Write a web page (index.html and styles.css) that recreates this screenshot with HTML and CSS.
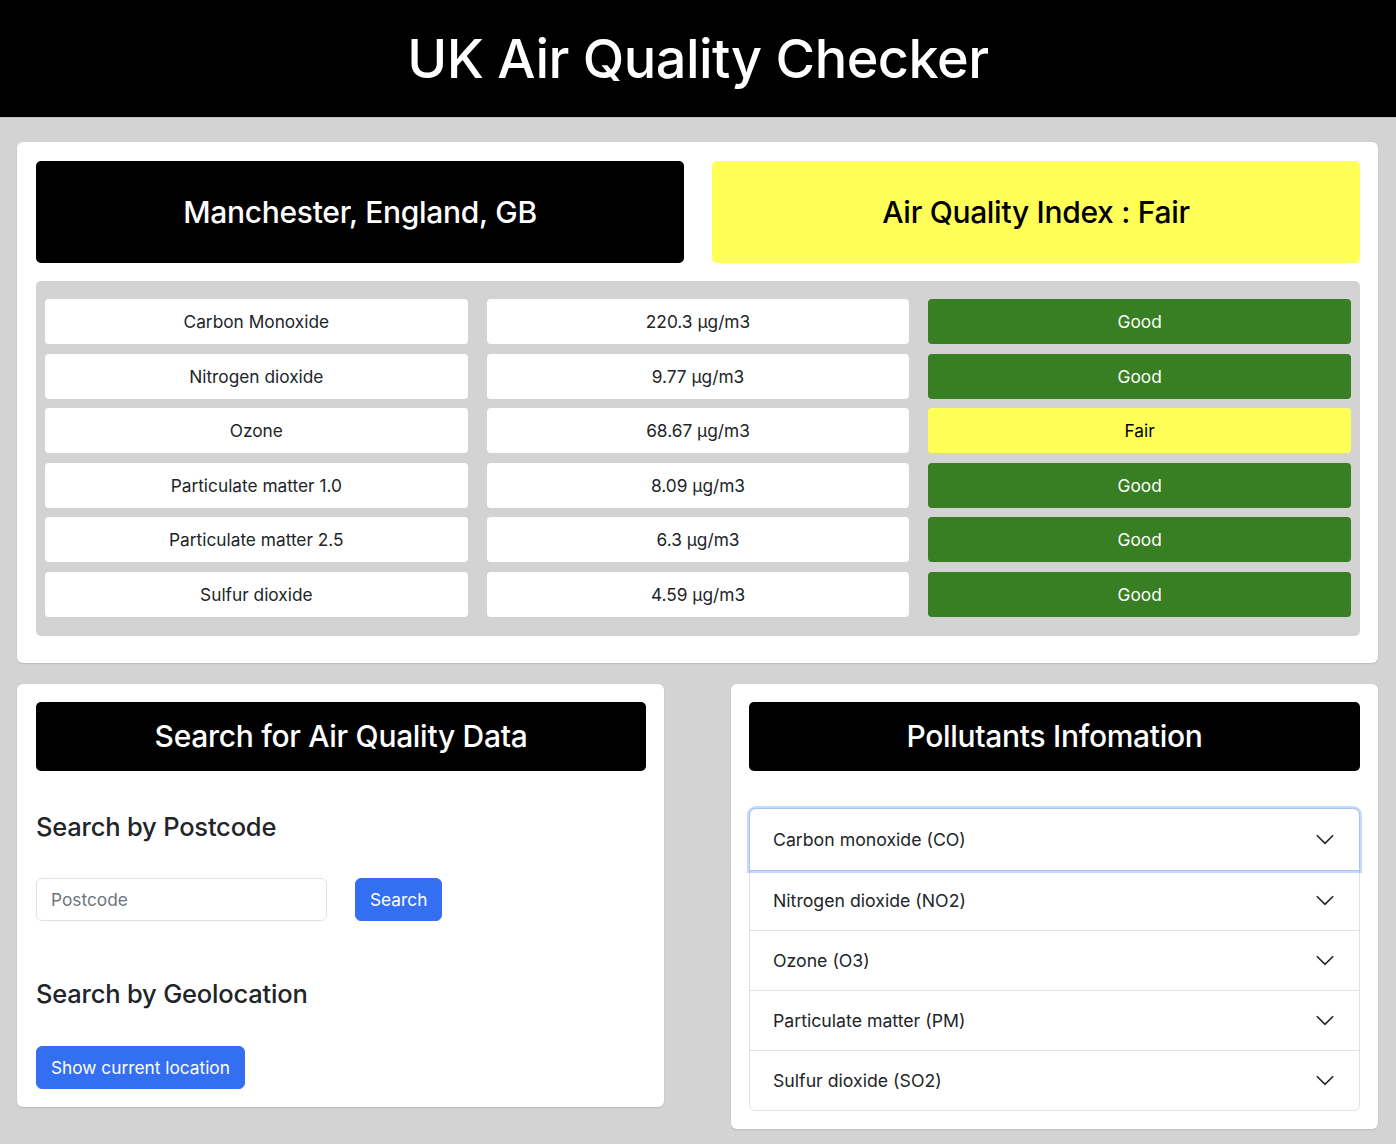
FILE: index.html
```html
<!DOCTYPE html>
<html lang="en">
<head>
<meta charset="utf-8">
<title>UK Air Quality Checker</title>
<link rel="stylesheet" href="styles.css">
</head>
<body>
<header class="topbar"><h1>UK Air Quality Checker</h1></header>
<main class="page">
  <section class="card summary">
    <div class="banners">
      <div class="banner banner-dark">Manchester, England, GB</div>
      <div class="banner banner-fair">Air Quality Index : Fair</div>
    </div>
    <div class="grid-table">
      <div class="cell">Carbon Monoxide</div><div class="cell">220.3 µg/m3</div><div class="cell good">Good</div>
      <div class="cell">Nitrogen dioxide</div><div class="cell">9.77 µg/m3</div><div class="cell good">Good</div>
      <div class="cell">Ozone</div><div class="cell">68.67 µg/m3</div><div class="cell fair">Fair</div>
      <div class="cell">Particulate matter 1.0</div><div class="cell">8.09 µg/m3</div><div class="cell good">Good</div>
      <div class="cell">Particulate matter 2.5</div><div class="cell">6.3 µg/m3</div><div class="cell good">Good</div>
      <div class="cell">Sulfur dioxide</div><div class="cell">4.59 µg/m3</div><div class="cell good">Good</div>
    </div>
  </section>
  <div class="lower">
    <section class="card search">
      <div class="panel-title">Search for Air Quality Data</div>
      <h2>Search by Postcode</h2>
      <div class="search-row">
        <input class="input" type="text" placeholder="Postcode">
        <button class="btn">Search</button>
      </div>
      <h2 class="geo">Search by Geolocation</h2>
      <button class="btn">Show current location</button>
    </section>
    <section class="card info">
      <div class="panel-title">Pollutants Infomation</div>
      <div class="accordion">
        <div class="acc-item focused"><span>Carbon monoxide (CO)</span><svg class="chev" viewBox="0 0 16 16"><path d="M1.5 5l6.5 6.5 6.5-6.5" fill="none" stroke="#212529" stroke-width="1.3"/></svg></div>
        <div class="acc-item"><span>Nitrogen dioxide (NO2)</span><svg class="chev" viewBox="0 0 16 16"><path d="M1.5 5l6.5 6.5 6.5-6.5" fill="none" stroke="#212529" stroke-width="1.3"/></svg></div>
        <div class="acc-item"><span>Ozone (O3)</span><svg class="chev" viewBox="0 0 16 16"><path d="M1.5 5l6.5 6.5 6.5-6.5" fill="none" stroke="#212529" stroke-width="1.3"/></svg></div>
        <div class="acc-item"><span>Particulate matter (PM)</span><svg class="chev" viewBox="0 0 16 16"><path d="M1.5 5l6.5 6.5 6.5-6.5" fill="none" stroke="#212529" stroke-width="1.3"/></svg></div>
        <div class="acc-item"><span>Sulfur dioxide (SO2)</span><svg class="chev" viewBox="0 0 16 16"><path d="M1.5 5l6.5 6.5 6.5-6.5" fill="none" stroke="#212529" stroke-width="1.3"/></svg></div>
      </div>
    </section>
  </div>
</main>
</body>
</html>
```
FILE: styles.css
```css
* { box-sizing: border-box; }
html, body { margin: 0; padding: 0; }
body {
  font-family: Inter, "Noto Sans", "Liberation Sans", sans-serif;
  background: #d3d3d3;
  color: #212529;
  min-height: 1144px;
}
.topbar {
  background: #000;
  height: 118px;
  display: flex;
  align-items: center;
  justify-content: center;
  border-bottom: 1px solid #bdbdbd;
}
.topbar h1 {
  margin: 0;
  color: #fff;
  font-weight: 500;
  font-size: 54px;
  letter-spacing: -0.5px;
}
.page { padding: 24px 18px 14px 17px; }
.card {
  background: #fff;
  border-radius: 6px;
  box-shadow: 0 1px 2px rgba(0,0,0,0.12);
  padding: 18px;
}
.summary { padding: 19px 18px 27px 19px; }
.banners {
  display: grid;
  grid-template-columns: 1fr 1fr;
  gap: 28px;
}
.banner {
  height: 102px;
  border-radius: 5px;
  display: flex;
  align-items: center;
  justify-content: center;
  font-size: 30px;
  font-weight: 500;
  letter-spacing: -0.3px;
}
.banner-dark { background: #000; color: #fff; }
.banner-fair { background: #ffff57; color: #000; }
.grid-table {
  margin-top: 18px;
  background: #d3d3d3;
  border-radius: 5px;
  padding: 18px 9px 19px 9px;
  display: grid;
  grid-template-columns: 1fr 1fr 1fr;
  column-gap: 19px;
  row-gap: 9.5px;
}
.cell {
  background: #fff;
  border-radius: 4px;
  height: 45px;
  display: flex;
  align-items: center;
  justify-content: center;
  font-size: 17.3px;
  color: #212529;
}
.cell.good { background: #387e22; color: #fff; }
.cell.fair { background: #ffff57; color: #000; }
.lower {
  margin-top: 21px;
  display: grid;
  grid-template-columns: 647px 647px;
  justify-content: space-between;
  align-items: start;
}
.panel-title {
  background: #000;
  color: #fff;
  height: 69px;
  border-radius: 5px;
  display: flex;
  align-items: center;
  justify-content: center;
  font-size: 30px;
  font-weight: 500;
  letter-spacing: -0.3px;
}
.search { padding: 18px 18px 18px 19px; }
.search h2 {
  margin: 40px 0 36px 0;
  font-size: 25.5px;
  line-height: 31px;
  font-weight: 500;
  color: #212529;
  letter-spacing: -0.2px;
}
.search h2.geo { margin: 57px 0 37px 0; }
.search-row {
  display: flex;
  gap: 28px;
  align-items: center;
}
.input {
  width: 291px;
  height: 43px;
  border: 1px solid #dee2e6;
  border-radius: 6px;
  padding: 0 14px;
  font-family: inherit;
  font-size: 17.3px;
  color: #212529;
}
.input::placeholder { color: #6c757d; }
.btn {
  display: block;
  background: #346ff2;
  color: #fff;
  border: 1px solid #346ff2;
  border-radius: 6px;
  height: 43px;
  padding: 0 14px;
  font-family: inherit;
  font-size: 17.3px;
}
.accordion {
  margin-top: 37px;
  border: 1px solid #dee2e6;
  border-radius: 6px;
}
.acc-item {
  height: 60px;
  display: flex;
  align-items: center;
  justify-content: space-between;
  padding: 0 24px 0 23px;
  font-size: 17.7px;
  color: #212529;
  border-top: 1px solid #dee2e6;
}
.acc-item:first-child {
  border-top: none;
  height: 61px;
  border-radius: 6px 6px 0 0;
}
.acc-item.focused {
  box-shadow: 0 0 0 3px rgba(13,110,253,0.25);
  position: relative;
}
.chev { width: 20px; height: 20px; }
```
